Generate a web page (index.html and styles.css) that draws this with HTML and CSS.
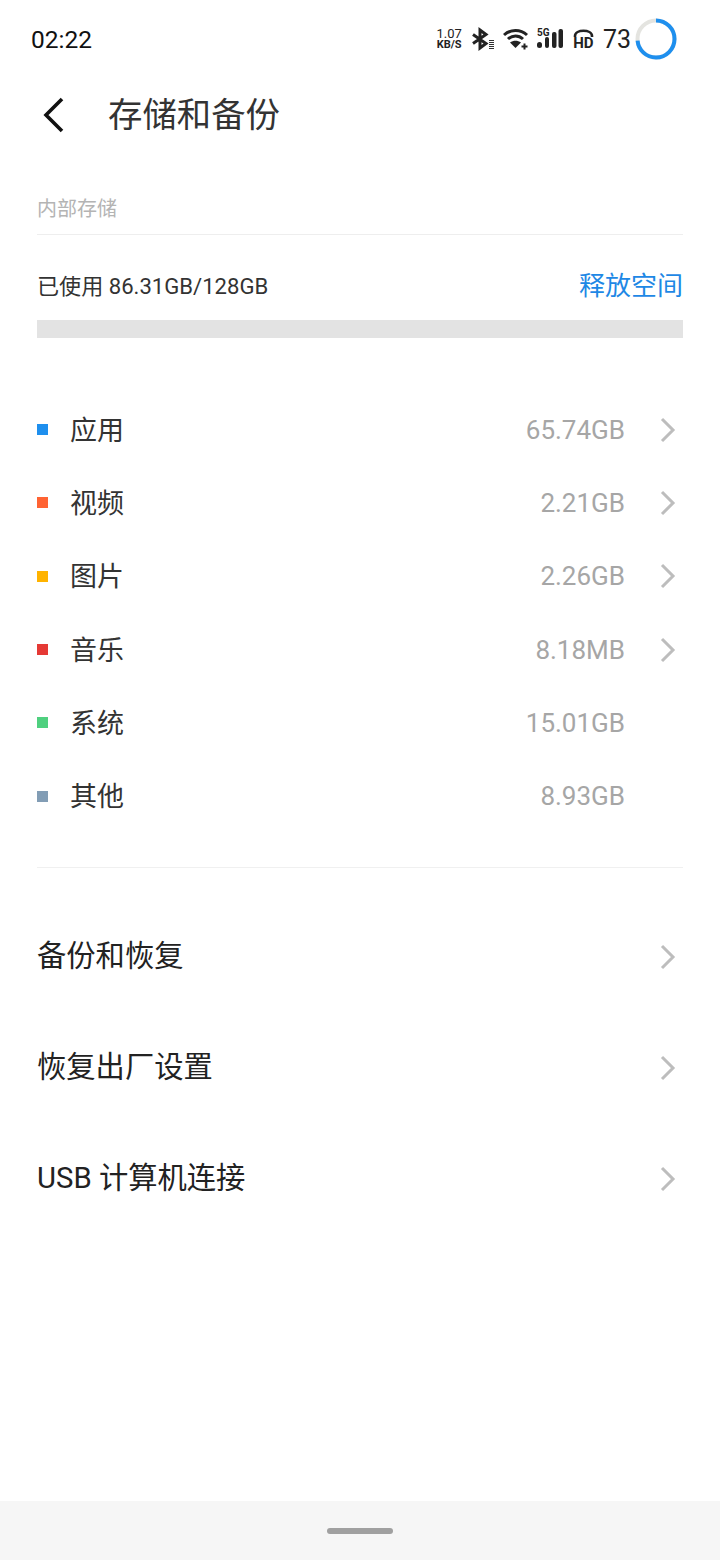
FILE: index.html
```html
<!DOCTYPE html>
<html lang="zh-CN">
<head>
<meta charset="utf-8">
<title>存储和备份</title>
<link rel="stylesheet" href="styles.css">
</head>
<body>

<div class="status-bar">
  <span class="clock">02:22</span>
  <div class="status-icons">
    <span class="speed"><span>1.07</span><span>KB/S</span></span>
    <svg class="ic-bt" width="24" height="24" viewBox="0 0 24 24">
      <path d="M2 7.5L15 16.5L9 21V3L15 7.5L2 16.5" fill="none" stroke="#222" stroke-width="3"/>
      <path d="M18 13.500h5M18 15.500h5M18 17.500h5M18 19.500h5M18 21.500h5" stroke="#333" stroke-width="1"/>
    </svg>
    <svg class="ic-wifi" width="28" height="22" viewBox="0 0 28 22">
      <path d="M1 7C7.500 1 17.500 1 24 7M5 11c4.400-4 10.600-4 15 0" fill="none" stroke="#222" stroke-width="3"/>
      <path d="M7 14.500c3.500-2.500 7.500-2.500 11 0l-5.500 5.500z" fill="#222"/>
      <path d="M18.500 18.500h6M21.500 15.500v6" stroke="#222" stroke-width="2"/>
    </svg>
    <span class="signal">
      <span class="sig-label">5G</span>
      <svg width="29" height="22" viewBox="0 0 29 22">
        <rect x="0" y="14" width="5" height="6" rx="2.500" fill="#222"/>
        <rect x="8" y="9" width="4" height="11" rx="2" fill="#222"/>
        <rect x="15" y="4" width="4.500" height="16" rx="2" fill="#222"/>
        <rect x="21.500" y="1" width="4.500" height="19" rx="2" fill="#222"/>
      </svg>
    </span>
    <span class="hd">
      <svg class="hd-arc" width="21" height="8" viewBox="0 0 21 8">
        <path d="M2 8V7C2 0 19 0 19 7V8" fill="none" stroke="#222" stroke-width="2.600"/>
      </svg>
      <span class="hd-label">HD</span>
    </span>
    <span class="battery-num">73</span>
    <svg class="ic-ring" width="42" height="42" viewBox="0 0 42 42">
      <circle cx="21" cy="21" r="18.500" fill="none" stroke="#e4e4e0" stroke-width="4"/>
      <circle cx="21" cy="21" r="18.500" fill="none" stroke="#1e8fee" stroke-width="4" stroke-dasharray="85 116.200" transform="rotate(-90 21 21)"/>
    </svg>
  </div>
</div>

<div class="title-bar">
  <svg class="back" width="24" height="36" viewBox="0 0 24 36">
    <path d="M21 2L5 18l16 16" fill="none" stroke="#111" stroke-width="3.600"/>
  </svg>
  <h1>存储和备份</h1>
</div>

<div class="content">
  <div class="section-label">内部存储</div>

  <div class="usage-row">
    <span class="usage-text">已使用 86.31GB/128GB</span>
    <span class="free-link">释放空间</span>
  </div>
  <div class="usage-bar"></div>

  <ul class="legend">
    <li><i class="dot dot-app"></i><span class="name">应用</span><span class="size">65.74GB</span><svg class="chev" viewBox="0 0 16 26"><path d="M2 2l11 11L2 24"/></svg></li>
    <li><i class="dot dot-video"></i><span class="name">视频</span><span class="size">2.21GB</span><svg class="chev" viewBox="0 0 16 26"><path d="M2 2l11 11L2 24"/></svg></li>
    <li><i class="dot dot-image"></i><span class="name">图片</span><span class="size">2.26GB</span><svg class="chev" viewBox="0 0 16 26"><path d="M2 2l11 11L2 24"/></svg></li>
    <li><i class="dot dot-music"></i><span class="name">音乐</span><span class="size">8.18MB</span><svg class="chev" viewBox="0 0 16 26"><path d="M2 2l11 11L2 24"/></svg></li>
    <li><i class="dot dot-system"></i><span class="name">系统</span><span class="size">15.01GB</span><span class="chev"></span></li>
    <li><i class="dot dot-other"></i><span class="name">其他</span><span class="size">8.93GB</span><span class="chev"></span></li>
  </ul>

  <div class="menu">
    <div class="menu-item"><span>备份和恢复</span><svg class="chev" viewBox="0 0 16 26"><path d="M2 2l11 11L2 24"/></svg></div>
    <div class="menu-item"><span>恢复出厂设置</span><svg class="chev" viewBox="0 0 16 26"><path d="M2 2l11 11L2 24"/></svg></div>
    <div class="menu-item"><span>USB 计算机连接</span><svg class="chev" viewBox="0 0 16 26"><path d="M2 2l11 11L2 24"/></svg></div>
  </div>
</div>

<div class="nav-bar"><span class="nav-handle"></span></div>

</body>
</html>
```

FILE: styles.css
```css
* {
  box-sizing: border-box;
}

html, body {
  height: 100%;
}

body {
  margin: 0;
  width: 720px;
  height: 1560px;
  background-color: #fff;
  font-family: Roboto, "Noto Sans CJK SC", sans-serif;
  color: #222;
  display: flex;
  flex-direction: column;
  overflow: hidden;
}

/* status bar */
.status-bar {
  height: 78px;
  flex: none;
  padding: 0 43px 0 31px;
  display: flex;
  align-items: center;
  justify-content: space-between;
}

.clock {
  font-size: 24.5px;
  font-weight: 400;
  color: #111;
}

.status-icons {
  display: flex;
  align-items: center;
}

.speed {
  display: flex;
  flex-direction: column;
  align-items: center;
  font-size: 11px;
  font-weight: 700;
  line-height: 11px;
  margin-right: 9px;
}

.speed span:first-child {
  font-size: 13px;
  font-weight: 400;
}

.ic-bt {
  margin-right: 8px;
}

.ic-wifi {
  margin-right: 6px;
}

.signal {
  position: relative;
  display: flex;
  margin-right: 7px;
}

.sig-label {
  position: absolute;
  left: 0;
  top: 0;
  font-size: 10px;
  font-weight: 700;
  line-height: 10px;
}

.hd {
  display: flex;
  flex-direction: column;
  align-items: center;
  margin-right: 9px;
}

.hd-arc {
  margin-bottom: 1px;
}

.hd-label {
  font-size: 15px;
  font-weight: 700;
  line-height: 11px;
}

.battery-num {
  font-size: 25px;
  color: #222;
  margin-right: 4px;
}

/* title */
.title-bar {
  height: 74px;
  flex: none;
  display: flex;
  align-items: center;
  padding-left: 41px;
}

.back {
  flex: none;
}

h1 {
  margin: 0 0 6px 43px;
  font-size: 34.4px;
  font-weight: 400;
  color: #333;
}

/* storage */
.content {
  flex: 1;
  padding: 0 37px;
}

.section-label {
  height: 83px;
  padding-top: 42px;
  border-bottom: 1px solid #eee;
  font-size: 20px;
  line-height: 30px;
  color: #b4b4b4;
}

.usage-row {
  height: 85px;
  display: flex;
  align-items: center;
  justify-content: space-between;
  padding-top: 13px;
}

.usage-text {
  font-size: 22.1px;
  color: #333;
}

.free-link {
  font-size: 26px;
  margin-bottom: 2px;
  color: #1e88e5;
}

.usage-bar {
  height: 18px;
  background-color: #e3e3e3;
}

.legend {
  list-style: none;
  margin: 0;
  padding: 55px 0 34px;
  border-bottom: 1px solid #f0f0f0;
}

.legend li {
  height: 73.3px;
  display: flex;
  align-items: center;
}

.dot {
  width: 11px;
  height: 11px;
  flex: none;
  margin-right: 22px;
}

.dot-app { background-color: #1e8fee; }
.dot-video { background-color: #ff6333; }
.dot-image { background-color: #ffb300; }
.dot-music { background-color: #e53935; }
.dot-system { background-color: #4fd07f; }
.dot-other { background-color: #829db5; }

.name {
  flex: 1;
  font-size: 27px;
  margin-bottom: 3px;
  color: #333;
}

.size {
  font-size: 26px;
  color: #a6a6a6;
}

.chev {
  width: 16px;
  height: 26px;
  flex: none;
  margin: 0 7px 0 35px;
}

svg.chev path {
  fill: none;
  stroke: #bdbdbd;
  stroke-width: 3;
}

/* bottom links */
.menu {
  padding-top: 33px;
}

.menu-item {
  height: 111px;
  display: flex;
  align-items: center;
  justify-content: space-between;
  font-size: 29.3px;
  color: #222;
}

.menu-item span {
  margin-bottom: 6px;
}

.menu-item .chev {
  margin-top: 2px;
}

/* nav */
.nav-bar {
  height: 59px;
  flex: none;
  background-color: #f6f6f6;
  display: flex;
  align-items: center;
  justify-content: center;
}

.nav-handle {
  width: 66px;
  height: 6px;
  border-radius: 3px;
  background-color: #a0a0a0;
}
```
